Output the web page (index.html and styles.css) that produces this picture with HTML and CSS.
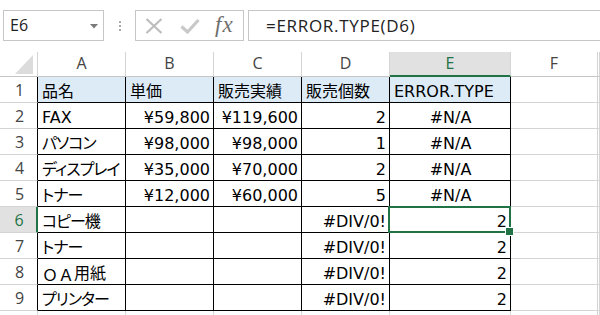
FILE: index.html
```html
<!DOCTYPE html>
<html lang="ja">
<head>
<meta charset="utf-8">
<link rel="stylesheet" href="styles.css">
</head>
<body>
<div class="app">
  <div class="fbar">
    <div class="namebox">
      <span class="nb-text">E6</span>
      <svg class="caret" width="8" height="5" viewBox="0 0 8 5"><polygon points="0,0 8,0 4,4.5" fill="#7a7a7a"/></svg>
    </div>
    <div class="grip"><i></i><i></i><i></i></div>
    <div class="fxbox">
      <svg class="ico-x" width="18" height="16" viewBox="0 0 18 16"><path d="M1.5 1 L16.5 15 M16.5 1 L1.5 15" stroke="#bdbdbd" stroke-width="2.2" fill="none"/></svg>
      <svg class="ico-ok" width="20" height="16" viewBox="0 0 20 16"><path d="M1.5 8.5 L7.5 14 L18.5 2" stroke="#c9c9c9" stroke-width="3.2" fill="none"/></svg>
      <span class="fx">fx</span>
    </div>
    <div class="formula">=ERROR.TYPE(D6)</div>
  </div>

  <div class="sheet">
    <div class="corner"><svg width="18" height="19" viewBox="0 0 18 19"><polygon points="18,0 18,19 0,19" fill="#dcdcdc"/></svg></div>
    <div class="ch">A</div><div class="ch">B</div><div class="ch">C</div><div class="ch">D</div><div class="ch sel">E</div><div class="ch">F</div><div class="ch"></div>

    <div class="rh">1</div>
    <div class="c hd">品名</div><div class="c hd">単価</div><div class="c hd">販売実績</div><div class="c hd">販売個数</div><div class="c hd">ERROR.TYPE</div><div class="g"></div><div class="g"></div>

    <div class="rh">2</div>
    <div class="c">FAX</div><div class="c r">¥59,800</div><div class="c r">¥119,600</div><div class="c r">2</div><div class="c m">#N/A</div><div class="g"></div><div class="g"></div>

    <div class="rh">3</div>
    <div class="c kana">パソコン</div><div class="c r">¥98,000</div><div class="c r">¥98,000</div><div class="c r">1</div><div class="c m">#N/A</div><div class="g"></div><div class="g"></div>

    <div class="rh">4</div>
    <div class="c kana">ディスプレイ</div><div class="c r">¥35,000</div><div class="c r">¥70,000</div><div class="c r">2</div><div class="c m">#N/A</div><div class="g"></div><div class="g"></div>

    <div class="rh">5</div>
    <div class="c kana">トナー</div><div class="c r">¥12,000</div><div class="c r">¥60,000</div><div class="c r">5</div><div class="c m">#N/A</div><div class="g"></div><div class="g"></div>

    <div class="rh rsel">6</div>
    <div class="c kana">コピー機</div><div class="c"></div><div class="c"></div><div class="c r">#DIV/0!</div><div class="c r active">2</div><div class="g"></div><div class="g"></div>

    <div class="rh">7</div>
    <div class="c kana">トナー</div><div class="c"></div><div class="c"></div><div class="c r">#DIV/0!</div><div class="c r">2</div><div class="g"></div><div class="g"></div>

    <div class="rh">8</div>
    <div class="c"><span class="fw">ＯＡ</span>用紙</div><div class="c"></div><div class="c"></div><div class="c r">#DIV/0!</div><div class="c r">2</div><div class="g"></div><div class="g"></div>

    <div class="rh">9</div>
    <div class="c kana">プリンター</div><div class="c"></div><div class="c"></div><div class="c r">#DIV/0!</div><div class="c r">2</div><div class="g"></div><div class="g"></div>

    <div class="rh last"></div>
    <div class="g"></div><div class="g"></div><div class="g"></div><div class="g"></div><div class="g"></div><div class="g"></div><div class="g"></div>
  </div>
</div>
</body>
</html>
```

FILE: styles.css
```css
* { box-sizing: border-box; }
html, body { margin: 0; padding: 0; background: #fff; }
body { width: 600px; height: 315px; overflow: hidden; }

.app { width: 600px; height: 315px; overflow: hidden; }

.fbar {
  display: flex;
  align-items: flex-start;
  height: 52px;
  padding: 10px 0 0 3px;
}
.namebox {
  width: 101px;
  height: 31px;
  border: 1px solid #c6c6c6;
  display: flex;
  align-items: center;
  justify-content: space-between;
  padding: 0 5px 0 6px;
  font-family: "Open Sans", "Noto Sans", sans-serif;
  font-size: 16px;
  color: #222;
}
.nb-text { margin-top: -1px; }
.caret { margin-top: 1px; }

.grip {
  width: 31px;
  height: 31px;
  display: flex;
  flex-direction: column;
  align-items: center;
  justify-content: center;
  gap: 2px;
}
.grip i {
  display: block;
  width: 2px;
  height: 2px;
  background: #a9a9a9;
}

.fxbox {
  width: 109px;
  height: 31px;
  border: 1px solid #c6c6c6;
  display: flex;
  align-items: center;
  padding-left: 9px;
}
.ico-x { margin-right: 17px; }
.ico-ok { margin-right: 15px; margin-top: 1px; }
.fx {
  font-family: "Liberation Serif", "DejaVu Serif", serif;
  font-style: italic;
  font-size: 23px;
  color: #6e6e6e;
  letter-spacing: 1px;
  margin-top: -2px;
}

.formula {
  flex: 1;
  margin-left: 4px;
  margin-right: -10px;
  height: 31px;
  border: 1px solid #c6c6c6;
  padding-left: 17px;
  display: flex;
  align-items: center;
  font-family: "Open Sans", "Noto Sans", sans-serif;
  font-size: 17px;
  letter-spacing: 0.7px;
  color: #222;
}

.sheet {
  display: grid;
  grid-template-columns: 38px 88px 88px 88px 88px 121px 87px 1fr;
  grid-template-rows: 25px repeat(10, 26px);
}

.corner {
  border-right: 1px solid #d4d4d4;
  border-bottom: 1px solid #c6c6c6;
  display: flex;
  align-items: flex-end;
  justify-content: flex-end;
  padding: 0 4px 2px 0;
}
.corner svg { display: block; }

.ch {
  border-right: 1px solid #d4d4d4;
  border-bottom: 1px solid #c6c6c6;
  display: flex;
  align-items: center;
  justify-content: center;
  font-family: "Open Sans", "Noto Sans", sans-serif;
  font-size: 16px;
  color: #444;
  padding-bottom: 2px;
}
.ch.sel {
  background: #e1e1e1;
  border-bottom: 2px solid #217346;
  color: #217346;
  padding-bottom: 1px;
}

.rh {
  border-right: 1px solid #000;
  border-bottom: 1px solid #d4d4d4;
  display: flex;
  align-items: center;
  justify-content: center;
  font-family: "Open Sans", "Noto Sans", sans-serif;
  font-size: 16px;
  color: #444;
  padding-left: 2px;
}
.rh.rsel {
  background: #e1e1e1;
  border-right: 2px solid #217346;
  color: #217346;
}
.rh.last { border-right-color: #d4d4d4; }

.c {
  border-right: 1px solid #000;
  border-bottom: 1px solid #000;
  display: flex;
  align-items: flex-end;
  padding: 0 3px 0 4px;
  font-family: "DejaVu Sans", "Noto Sans CJK JP", sans-serif;
  font-size: 16px;
  line-height: 20px;
  color: #000;
  white-space: nowrap;
  overflow: visible;
}
.c.kana {
  font-feature-settings: "palt" 1;
  letter-spacing: -1px;
}
.fw { font-family: "Noto Sans CJK JP", sans-serif; }
.c.hd { background: #ddebf7; }
.c.r { justify-content: flex-end; }
.c.m { justify-content: center; }

.g {
  border-right: 1px solid #d4d4d4;
  border-bottom: 1px solid #d4d4d4;
}

.active { position: relative; z-index: 2; }
.active::before {
  content: "";
  position: absolute;
  top: -1px;
  left: -2px;
  right: -1px;
  bottom: -1px;
  border: 2px solid #217346;
}
.active::after {
  content: "";
  position: absolute;
  right: -4px;
  bottom: -4px;
  width: 7px;
  height: 7px;
  background: #217346;
  border: 1px solid #fff;
}
```
